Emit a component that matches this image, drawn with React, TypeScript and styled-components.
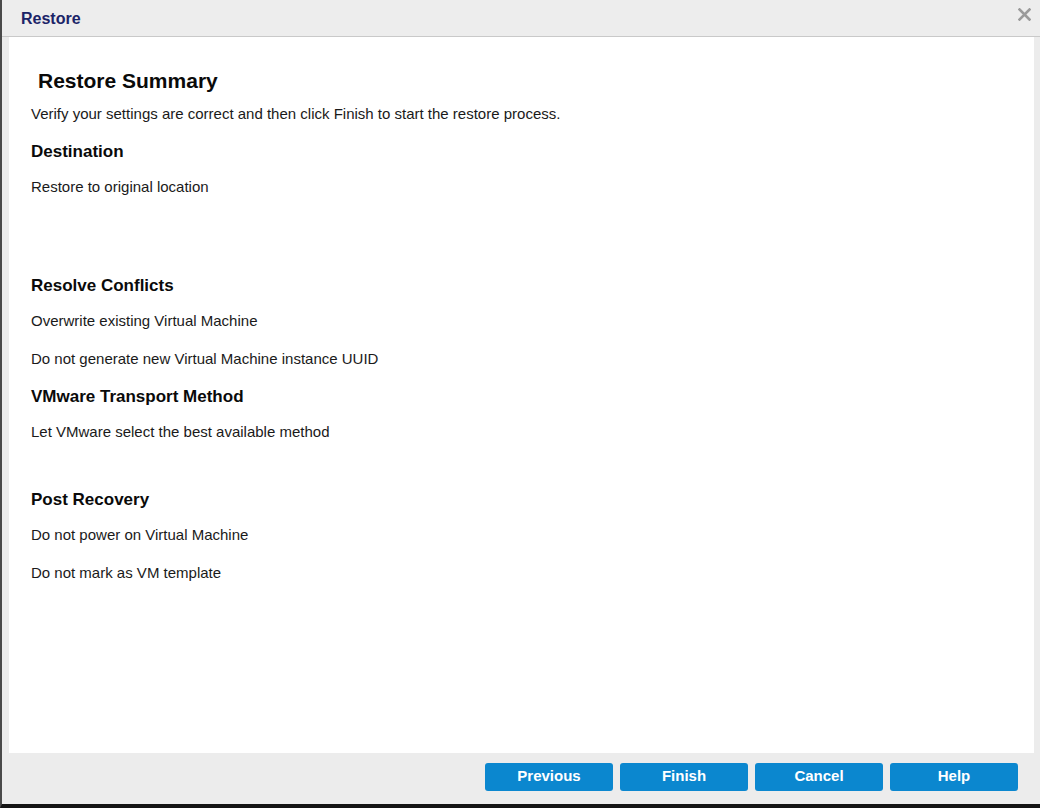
import React from 'react'
import styled, { createGlobalStyle } from 'styled-components'

const GlobalStyle = createGlobalStyle`
  html, body {
    margin: 0;
    padding: 0;
    background: #ececec;
  }
  * { box-sizing: border-box; }
`

type SectionData = {
  title: string
  items: string[]
  space: number
}

const sections: SectionData[] = [
  { title: 'Destination', items: ['Restore to original location'], space: 60 },
  {
    title: 'Resolve Conflicts',
    items: ['Overwrite existing Virtual Machine', 'Do not generate new Virtual Machine instance UUID'],
    space: -1,
  },
  { title: 'VMware Transport Method', items: ['Let VMware select the best available method'], space: 29 },
  { title: 'Post Recovery', items: ['Do not power on Virtual Machine', 'Do not mark as VM template'], space: 0 },
]

export default function App() {
  return (
    <>
      <GlobalStyle />
      <Frame>
        <Header>
          <Title>Restore</Title>
          <Close aria-label="close">
            <svg width="13" height="13" viewBox="0 0 13 13">
              <path d="M1.5 1.5 L11.5 11.5 M11.5 1.5 L1.5 11.5" stroke="#9a9a9a" strokeWidth="2.6" strokeLinecap="square" />
            </svg>
          </Close>
        </Header>
        <Panel>
          <SummaryTitle>Restore Summary</SummaryTitle>
          <Intro>Verify your settings are correct and then click Finish to start the restore process.</Intro>
          {sections.map((s) => (
            <Section key={s.title} $space={s.space}>
              <Heading>{s.title}</Heading>
              {s.items.map((item) => (
                <Item key={item}>{item}</Item>
              ))}
            </Section>
          ))}
        </Panel>
        <Footer>
          <Button>Previous</Button>
          <Button>Finish</Button>
          <Button>Cancel</Button>
          <Button>Help</Button>
        </Footer>
      </Frame>
    </>
  )
}

const Frame = styled.div`
  width: 1040px;
  height: 808px;
  display: flex;
  flex-direction: column;
  background: #ececec;
  border-left: 2px solid #4a4a4a;
  border-bottom: 4px solid #141414;
  font-family: 'Liberation Sans', Arial, sans-serif;
  overflow: hidden;
`

const Header = styled.div`
  height: 37px;
  flex-shrink: 0;
  display: flex;
  align-items: center;
  justify-content: space-between;
  padding: 0 9px 0 19px;
  border-bottom: 1px solid #c9c9c9;
  background: #ededed;
`

const Title = styled.h2`
  margin: 0;
  font-size: 16px;
  font-weight: bold;
  color: #1b2468;
  margin-top: 1px;
`

const Close = styled.span`
  display: flex;
  align-items: center;
  margin-top: -8px;
`

const Panel = styled.div`
  height: 716px;
  flex-shrink: 0;
  margin: 0 6px 0 7px;
  background: #ffffff;
  padding: 32px 0 0 22px;
  display: flex;
  flex-direction: column;
  color: #111;
`

const SummaryTitle = styled.h1`
  margin: 0 0 11px 7px;
  font-size: 21px;
  line-height: 24px;
  font-weight: bold;
  color: #0a0a0a;
`

const Intro = styled.p`
  margin: 0 0 17px;
  font-size: 15px;
  line-height: 20px;
  color: #1a1a1a;
`

const Section = styled.section<{ $space: number }>`
  display: flex;
  flex-direction: column;
  margin-bottom: ${(p) => p.$space}px;
`

const Heading = styled.h3`
  margin: 0 0 14px;
  font-size: 17px;
  line-height: 22px;
  font-weight: bold;
  color: #0a0a0a;
`

const Item = styled.div`
  margin: 0 0 18px;
  font-size: 15px;
  line-height: 20px;
  color: #1a1a1a;
`

const Footer = styled.div`
  flex: 1;
  display: flex;
  justify-content: flex-end;
  align-items: flex-start;
  gap: 7px;
  padding: 10px 22px 0 0;
`

const Button = styled.button`
  width: 128px;
  height: 28px;
  border: none;
  border-radius: 3px;
  background: #0b87cf;
  color: #ffffff;
  font-family: 'Liberation Sans', Arial, sans-serif;
  font-size: 15px;
  font-weight: bold;
  padding: 0;
  padding-bottom: 3px;
  cursor: pointer;
`
